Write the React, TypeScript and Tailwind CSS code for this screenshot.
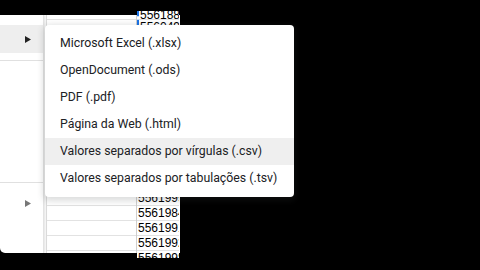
import React from "react";

const items = [
  "Microsoft Excel (.xlsx)",
  "OpenDocument (.ods)",
  "PDF (.pdf)",
  "Página da Web (.html)",
  "Valores separados por vírgulas (.csv)",
  "Valores separados por tabulações (.tsv)",
];

function Arrow({ color }: { color: string }) {
  return (
    <svg width="6" height="7" viewBox="0 0 6 7">
      <path d="M0 0 L6 3.5 L0 7 Z" fill={color} />
    </svg>
  );
}

export default function App() {
  const bottomNums = ["5561999", "5561984", "5561991", "5561992"];
  return (
    <div className="w-[480px] h-[270px] bg-black relative overflow-hidden font-['Roboto',sans-serif]">
      <div className="pt-[15px] flex items-start">
        <div className="flex items-start w-[180px] h-[238px] bg-white rounded-bl-[5px]">
          {/* left main menu */}
          <div className="w-[44px] h-full shrink-0 flex flex-col pt-[10px] border-r border-[#e3e3e3] rounded-bl-[5px] shadow-[1px_0_3px_rgba(0,0,0,0.12)]">
            <div className="h-[28px] bg-[#eeeeee] flex items-center justify-end pr-[12px]">
              <Arrow color="#222222" />
            </div>
            <div className="mt-[7px] h-px bg-[#e0e0e0]" />
            <div className="h-[121px]" />
            <div className="h-px bg-[#e0e0e0]" />
            <div className="mt-[6px] h-[28px] flex items-center justify-end pr-[12px]">
              <Arrow color="#777777" />
            </div>
          </div>
          {/* sheet first column */}
          <div className="ml-[2px] w-[91px] h-full flex flex-col border-l border-[#dadada] border-r border-r-[#cfcfcf]">
            <div className="h-[5px] border-b border-[#e2e2e2]" />
            <div className="flex-1" />
            <div className="flex flex-col">
              {[0, 1, 2, 3].map((i) => (
                <div key={i} className="h-[15px] border-b border-[#e2e2e2]" />
              ))}
            </div>
            <div className="h-[2px]" />
          </div>
          {/* number column */}
          <div className="w-[42px] h-[247px] -mt-[4px] flex flex-col overflow-hidden bg-white font-['Liberation_Sans',Arial,sans-serif] text-[12px] leading-[15px] text-black">
            <div className="h-[14px] border-l-2 border-dashed border-[#1a73e8] flex flex-col">
              <div className="h-[8px] overflow-hidden flex items-end pl-[1px]">
                <span className="leading-[12px] -mb-[2px]">5561886</span>
              </div>
              <div className="h-[6px] overflow-hidden border-t border-[#e2e2e2] pl-[1px]">
                <span className="leading-[14px]">5560495</span>
              </div>
            </div>
            <div className="flex-1" />
            {bottomNums.map((n) => (
              <div key={n} className="h-[15px] shrink-0 border-b border-[#e2e2e2] pl-[1px] whitespace-nowrap">
                {n}
              </div>
            ))}
            <div className="h-[7px] shrink-0 overflow-hidden pl-[1px] whitespace-nowrap">5561998</div>
          </div>
        </div>
      </div>

      {/* submenu */}
      <div className="absolute left-[45px] top-[25px] w-[249px] h-[172px] bg-white rounded-[4px] py-[5px] shadow-[0_2px_6px_2px_rgba(60,64,67,0.18)]">
        {items.map((t, i) => (
          <div
            key={t}
            className={
              "h-[27px] pl-[15px] flex items-center text-[12.3px] text-[#202124] whitespace-nowrap " +
              (i === 4 ? "bg-[#efefef]" : "")
            }
          >
            {t}
          </div>
        ))}
      </div>
    </div>
  );
}
